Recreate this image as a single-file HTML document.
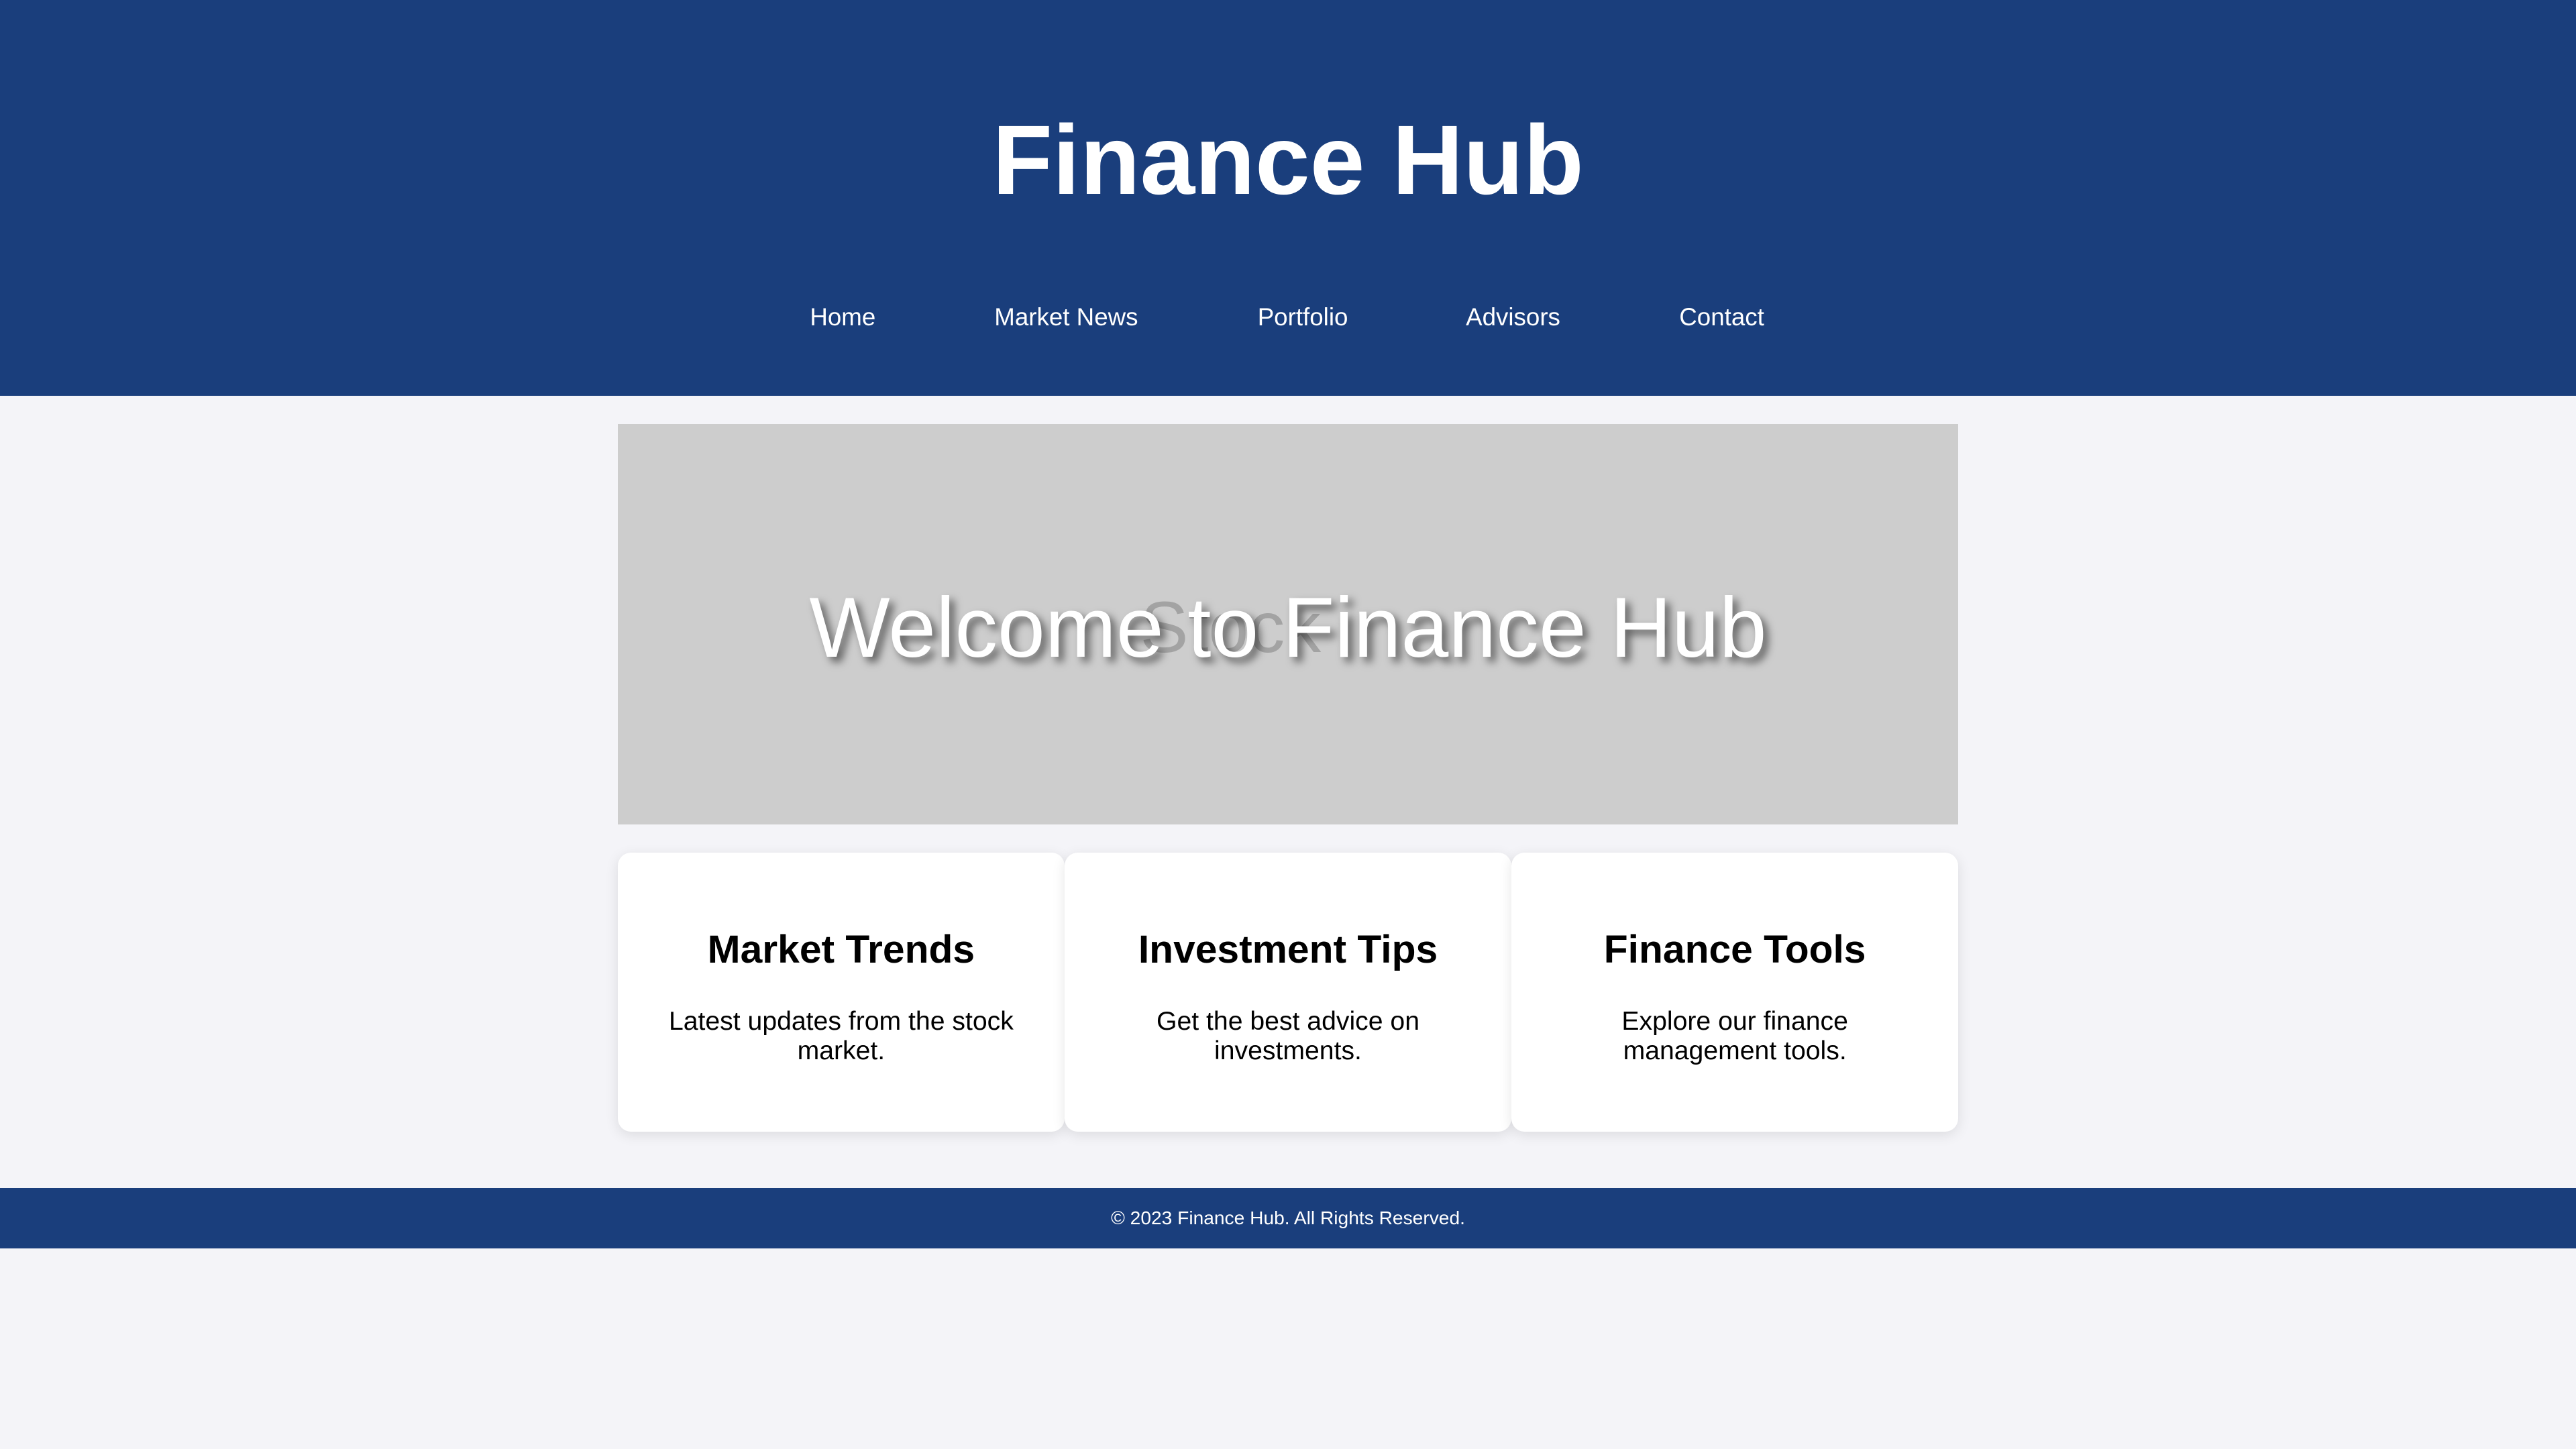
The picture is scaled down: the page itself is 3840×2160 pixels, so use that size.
<!DOCTYPE html>
<html><head><meta charset="utf-8"><style>
html,body{margin:0;padding:0}
body{width:3840px;height:2160px;background:#f4f4f8;overflow:hidden;font-family:"Liberation Sans",Arial,sans-serif}
#w{zoom:2.449;width:1568px;height:882px;position:relative}
.hd{position:absolute;left:0;top:0;width:1568px;height:241px;background:#1a3e7c;color:#fff}
.t{position:absolute;left:0;width:1568px;top:61px;text-align:center;font-size:60px;font-weight:bold;line-height:74px}
.nv{position:absolute;top:184px;font-size:15px;line-height:18px;transform:translateX(-50%);white-space:nowrap}
.hero{position:absolute;left:376px;top:258px;width:816px;height:244px;background:#cdcdcd}
.ht{position:absolute;left:0;width:816px;top:92px;text-align:center;font-size:52px;line-height:64px;color:#fff;text-shadow:3px 3px 5px rgba(0,0,0,.55);white-space:nowrap}
.alt{position:absolute;left:318px;top:98px;font-size:44px;color:#888;opacity:.6}
.card{position:absolute;top:519px;width:272px;height:170px;background:#fff;border-radius:8px;box-shadow:0 2px 8px rgba(0,0,0,.1);text-align:center}
.card h2{margin:0;position:absolute;top:44px;left:0;width:100%;font-size:24px;line-height:30px}
.card p{margin:0;position:absolute;top:94px;left:20px;right:20px;font-size:16px;line-height:18px}
.ft{position:absolute;left:0;top:723px;width:1568px;height:37px;background:#1a3e7c;color:#fff;font-size:11.5px;line-height:37px;text-align:center}
</style></head><body><div id="w">
<div class="hd">
<div class="t">Finance Hub</div>
<div class="nv" style="left:513px">Home</div>
<div class="nv" style="left:649px">Market News</div>
<div class="nv" style="left:793px">Portfolio</div>
<div class="nv" style="left:921px">Advisors</div>
<div class="nv" style="left:1048px">Contact</div>
</div>
<div class="hero"><div class="alt">Stock</div><div class="ht">Welcome to Finance Hub</div></div>
<div class="card" style="left:376px"><h2>Market Trends</h2><p>Latest updates from the stock market.</p></div>
<div class="card" style="left:648px"><h2>Investment Tips</h2><p>Get the best advice on investments.</p></div>
<div class="card" style="left:920px"><h2>Finance Tools</h2><p>Explore our finance management tools.</p></div>
<div class="ft">© 2023 Finance Hub. All Rights Reserved.</div>
</div></body></html>
